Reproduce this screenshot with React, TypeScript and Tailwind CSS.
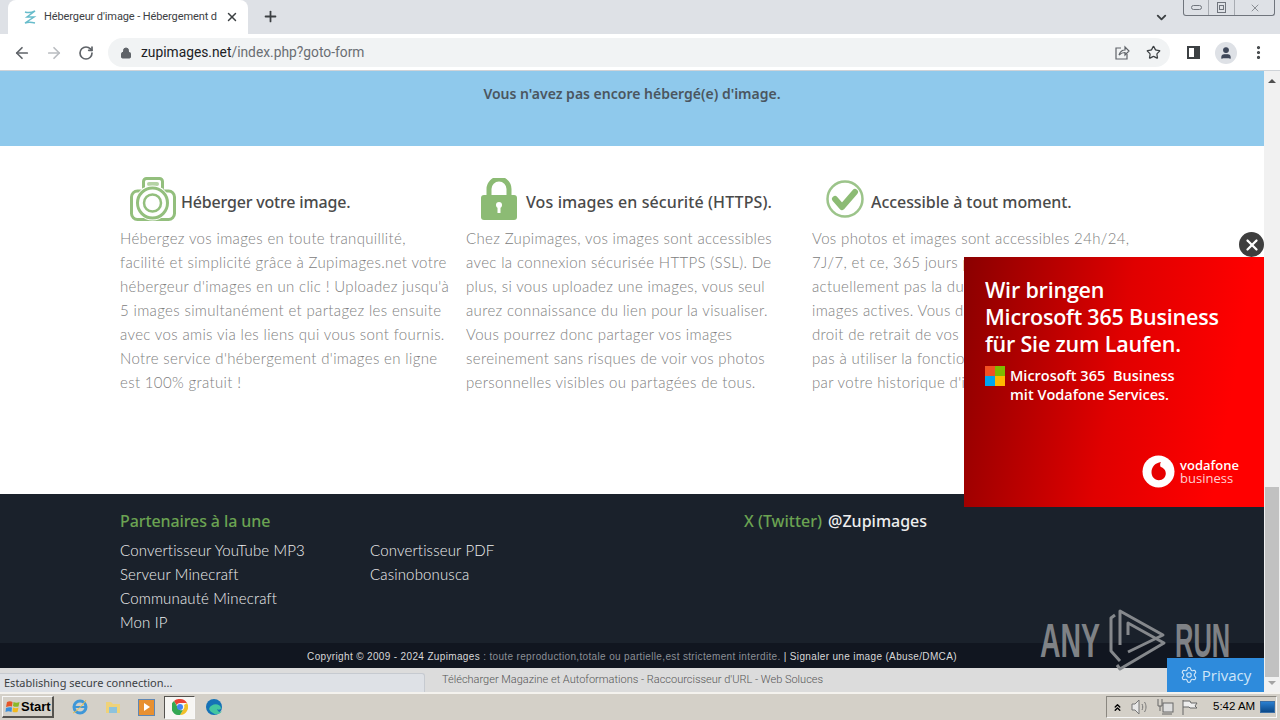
import { ArrowLeft, ArrowRight, ChevronDown, ChevronsUp, Lock, MoreVertical, Plus, RotateCw, Settings, Star, User, X } from 'lucide-react';

const columns = [
  {
    title: 'Héberger votre image.',
    icon: 'camera',
    rowClass: 'pl-[10px] gap-[5px]',
    titleClass: 'tracking-[-0.18px]',
    lines: [
      'Hébergez vos images en toute tranquillité,',
      "facilité et simplicité grâce à Zupimages.net votre",
      "hébergeur d'images en un clic ! Uploadez jusqu'à",
      '5 images simultanément et partagez les ensuite',
      'avec vos amis via les liens qui vous sont fournis.',
      "Notre service d'hébergement d'images en ligne",
      'est 100% gratuit !',
    ],
  },
  {
    title: 'Vos images en sécurité (HTTPS).',
    icon: 'lock',
    rowClass: 'pl-[15px] gap-[9px]',
    titleClass: 'tracking-[0.1px]',
    lines: [
      'Chez Zupimages, vos images sont accessibles',
      'avec la connexion sécurisée HTTPS (SSL). De',
      'plus, si vous uploadez une images, vous seul',
      'aurez connaissance du lien pour la visualiser.',
      'Vous pourrez donc partager vos images',
      'sereinement sans risques de voir vos photos',
      'personnelles visibles ou partagées de tous.',
    ],
  },
  {
    title: 'Accessible à tout moment.',
    icon: 'check',
    rowClass: 'pl-[14px] gap-[7px]',
    titleClass: 'tracking-[-0.06px]',
    // the rest of these lines sits behind the ad
    lines: [
      'Vos photos et images sont accessibles 24h/24,',
      '7J/7, et ce, 365 jours p',
      'actuellement pas la du',
      'images actives. Vous d',
      'droit de retrait de vos',
      'pas à utiliser la fonctio',
      "par votre historique d'i",
    ],
  },
];

function FeatureIcon({ name }: { name: string }) {
  if (name === 'camera') {
    return (
      <svg width="46" height="44" viewBox="0 0 46 44" fill="none" stroke="#93bf7d" strokeWidth="3" className="mb-[4px] shrink-0">
        <rect x="1.500" y="14" width="43" height="28.500" rx="6" />
        <path d="M13.500 14V4.500a3 3 0 0 1 3-3h13a3 3 0 0 1 3 3V14" />
        <rect x="17" y="5" width="12" height="4" rx="2" fill="#b5d3a5" stroke="none" />
        <circle cx="22.500" cy="26" r="17.500" fill="#fff" stroke="none" />
        <circle cx="22.500" cy="26" r="15" />
        <circle cx="22.500" cy="26" r="8.500" strokeWidth="2.500" />
      </svg>
    );
  }
  if (name === 'lock') {
    return (
      <svg width="36" height="42" viewBox="0 0 36 42" className="mb-[4px] shrink-0">
        <path d="M8 20v-9a10 10 0 0 1 20 0v9" fill="none" stroke="#8cbb74" strokeWidth="5" />
        <rect x="0" y="17" width="36" height="25" rx="3" fill="#8cbb74" />
        <circle cx="18" cy="27" r="3" fill="#fff" />
        <rect x="16.500" y="28" width="3" height="7" fill="#fff" />
      </svg>
    );
  }
  return (
    <svg width="38" height="38" viewBox="0 0 38 38" fill="none" className="mb-[4px] shrink-0">
      <circle cx="19" cy="19" r="17.500" stroke="#9cc48a" strokeWidth="2.500" />
      <path d="M9 19l7 8L29 12" stroke="#8cbb74" strokeWidth="6" strokeLinecap="round" strokeLinejoin="round" />
    </svg>
  );
}

function VodafoneLogo() {
  return (
    <svg width="33" height="33" viewBox="0 0 33 33">
      <circle cx="16.500" cy="16.500" r="16" fill="#fff" />
      <path d="M19 7c-5.500.7-9.500 4.800-9.500 10.200 0 4.300 3 8 7.300 8 4.200 0 7-3 7-6.700 0-3.700-2.400-5.600-5.300-6.800C18 10 18 8.400 19 7z" fill="#e60000" />
    </svg>
  );
}

export default function App() {
  return (
    <div className="relative flex h-[720px] w-[1280px] flex-col overflow-hidden bg-white font-['Noto_Sans',sans-serif]">
      {/* Tabs */}
      <div className="relative flex h-[34px] shrink-0 items-end bg-[#dee1e6] pl-[8px]">
        <div className="flex h-[34px] w-[240px] items-center gap-[6px] rounded-t-lg bg-white pl-[14px] pr-[9px]">
          <svg width="16" height="16" viewBox="0 0 16 16" fill="none" stroke="#67bccb" strokeWidth="1.500" className="shrink-0">
            <path d="M3 3c3 1 6 1 10-1L5 8l7 0-9 6c3-1 6-1 10 0" />
          </svg>
          <span className="flex-1 whitespace-nowrap font-['Roboto',sans-serif] text-[11px] tracking-[-0.1px] text-[#3c4043]">Hébergeur d'image - Hébergement d</span>
          <X className="h-[14px] w-[14px] shrink-0 text-[#3c4043]" strokeWidth={2.500} />
        </div>
        <Plus className="mb-[9px] ml-[14px] h-[17px] w-[17px] text-[#3c4043]" strokeWidth={2.500} />
        <ChevronDown className="absolute right-[111px] top-[10px] h-[15px] w-[15px] text-[#3c4043]" strokeWidth={3} />
        {/* Window controls */}
        <div className="absolute right-[5px] top-0 flex h-[16px] w-[92px] items-center rounded-b-[3px] border border-t-0 border-[#70757d]">
          <div className="flex h-full w-[25px] items-center justify-center border-r border-[#a8acb2]">
            <div className="h-[5px] w-[11px] rounded-sm border border-[#70757d]" />
          </div>
          <div className="flex h-full w-[26px] items-center justify-center border-r border-[#a8acb2]">
            <div className="relative h-[11px] w-[9px] border border-[#70757d]">
              <div className="absolute left-[1px] top-[2px] h-[5px] w-[5px] border border-[#70757d]" />
            </div>
          </div>
          <X className="mx-auto h-[12px] w-[12px] text-[#8b8f95]" strokeWidth={2} />
        </div>
      </div>

      {/* Toolbar */}
      <div className="flex h-[37px] shrink-0 items-center border-b border-[#cfd3d8] bg-white pt-[1px]">
        <ArrowLeft className="ml-[13px] h-[18px] w-[18px] text-[#5f6368]" strokeWidth={2.250} />
        <ArrowRight className="ml-[14px] h-[18px] w-[18px] text-[#b9bcc0]" strokeWidth={2.250} />
        <RotateCw className="ml-[15px] h-[16px] w-[16px] text-[#5f6368]" strokeWidth={2.500} />
        <div className="ml-[14px] flex h-[29px] w-[1062px] items-center rounded-full bg-[#f1f3f4] pl-[12px] pr-[9px]">
          <Lock className="h-[12px] w-[12px] text-[#5f6368]" fill="#5f6368" />
          <span className="ml-[9px] flex-1 font-['Roboto',sans-serif] text-[13.8px] text-[#202124]">
            zupimages.net<span className="text-[#6a6e73]">/index.php?goto-form</span>
          </span>
          <svg width="16" height="16" viewBox="0 0 16 16" fill="none" stroke="#5f6368" strokeWidth="1.200" className="mr-[16px]">
            <path d="M7 3H2v11h11V9" />
            <path d="M5 10c1-3 3-5 6-5V2l4 4-4 4V7.500C9 7.500 7 8 5 10z" />
          </svg>
          <Star className="h-[15px] w-[15px] text-[#3c4043]" strokeWidth={2} />
        </div>
        <div className="ml-[17px] flex h-[13px] w-[13px] justify-end border-2 border-[#3c4043]">
          <div className="h-full w-[4px] bg-[#3c4043]" />
        </div>
        <div className="ml-[15px] flex h-[22px] w-[22px] items-center justify-center rounded-full bg-[#dee1e6]">
          <User className="h-[14px] w-[14px] text-[#3e4759]" fill="#3e4759" />
        </div>
        <MoreVertical className="ml-[13px] h-[17px] w-[17px] text-[#3c4043]" strokeWidth={2.500} />
      </div>

      {/* Viewport */}
      <div className="flex min-h-0 flex-1">
        <div className="flex min-w-0 flex-1 flex-col">
          <div className="h-[75px] shrink-0 bg-[#8fc9ec] pt-[12px] text-center text-[14px] font-semibold text-[#4b5660]">
            Vous n'avez pas encore hébergé(e) d'image.
          </div>

          <div className="flex h-[348px] shrink-0 bg-white pl-[120px] pt-[30px]">
            {columns.map((col) => (
              <div key={col.title} className="w-[346px] shrink-0">
                <div className={`flex h-[50px] items-center ${col.rowClass}`}>
                  <FeatureIcon name={col.icon} />
                  <span className={`mt-[2px] whitespace-nowrap text-[16px] font-medium text-[#4a4a4a] ${col.titleClass}`}>{col.title}</span>
                </div>
                <div className="whitespace-nowrap font-['Lato',sans-serif] text-[15px] font-light leading-[24px] tracking-[0.35px] text-[#808080]">
                  {col.lines.map((line) => (
                    <div key={line}>{line}</div>
                  ))}
                </div>
              </div>
            ))}
          </div>

          <div className="flex h-[149px] shrink-0 bg-[#1a212b] pl-[120px] pt-[15px]">
            <div className="w-[624px]">
              <div className="text-[16px] font-medium tracking-[-0.1px] text-[#6ba352]">Partenaires à la une</div>
              <div className="mt-[5px] flex font-['Lato',sans-serif] text-[15px] font-light leading-[24px] tracking-[0.15px] text-[#f0f0f0]">
                <div className="w-[250px]">
                  <div>Convertisseur YouTube MP3</div>
                  <div>Serveur Minecraft</div>
                  <div>Communauté Minecraft</div>
                  <div>Mon IP</div>
                </div>
                <div>
                  <div>Convertisseur PDF</div>
                  <div>Casinobonusca</div>
                </div>
              </div>
            </div>
            <div className="flex gap-[6px] text-[16px] font-medium text-[#6ba352]">
              <span>X (Twitter)</span>
              <span className="text-[#eeeeee]">@Zupimages</span>
            </div>
          </div>

          <div className="h-[25px] shrink-0 bg-[#111620] pt-[6px] text-center font-['Liberation_Sans',sans-serif] text-[10px] tracking-[0.35px] text-[#d8d8d8]">
            Copyright © 2009 - 2024 Zupimages <span className="text-[#8b8f96]">: toute reproduction,totale ou partielle,est strictement interdite.</span> | Signaler une image (Abuse/DMCA)
          </div>

          <div className="flex h-[24px] shrink-0 items-center bg-[#dcdcdc] pl-[442px] font-['Roboto',sans-serif] text-[11px] font-light text-[#555555]">
            Télécharger Magazine et Autoformations - Raccourcisseur d'URL - Web Soluces
          </div>
        </div>

        {/* Scrollbar */}
        <div className="flex w-[16px] shrink-0 flex-col items-center bg-[#f1f1f1]">
          <div className="mt-[8px] h-0 w-0 border-x-[4px] border-b-[4px] border-x-transparent border-b-[#505050]" />
          <div className="mt-[404px] h-[190px] w-[14px] bg-[#c1c1c1]" />
          <div className="mt-[4px] h-0 w-0 border-x-[4px] border-t-[4px] border-x-transparent border-t-[#a3a3a3]" />
        </div>
      </div>

      {/* Taskbar */}
      <div className="flex h-[28px] shrink-0 items-center border-t-2 border-[#f4f2ee] bg-[#d4d0c8] pl-[2px]">
        <div className="flex h-[22px] w-[52px] items-center gap-[1px] border border-b-2 border-r-2 border-[#f7f7f7] border-b-[#55534f] border-r-[#55534f] pl-[2px]">
          <svg width="15" height="15" viewBox="0 0 15 15" className="shrink-0">
            <path d="M2 3c2-1 4-1 5.500 0L7 7.500C5 7 3.500 7 1 8z" fill="#e5562a" />
            <path d="M8.500 3c2 1 4 1 6 0l-1 4.500c-2 .5-4 .5-5.500-.5z" fill="#8ab82a" />
            <path d="M1 9c2-1 4-1 6-.5L6.500 13c-2-1-4-1-6 0z" fill="#3a8fdc" />
            <path d="M8 8.500c2 1 4 1 5.500 0l-1 4.500c-2 .5-4 .5-5-.5z" fill="#f2b91c" />
          </svg>
          <span className="font-['Liberation_Sans',sans-serif] text-[13px] font-bold text-black">Start</span>
        </div>
        <svg width="18" height="18" viewBox="0 0 18 18" fill="none" className="ml-[17px]">
          <circle cx="9" cy="9" r="6" stroke="#3f97d8" strokeWidth="3" />
          <path d="M3 9h12" stroke="#3f97d8" strokeWidth="2" />
          <path d="M2 15c3-1 10-8 13-13" stroke="#f0c040" strokeWidth="1" />
        </svg>
        <svg width="16" height="16" viewBox="0 0 16 16" className="ml-[16px]">
          <path d="M1 3h5l2 2h7v9H1z" fill="#efd279" />
          <rect x="4" y="8" width="8" height="6" fill="#8dc2dc" />
        </svg>
        <div className="ml-[17px] flex h-[17px] w-[17px] items-center justify-center border border-[#5e87b5] bg-[#e89030]">
          <div className="h-0 w-0 border-y-[4px] border-l-[6px] border-y-transparent border-l-white" />
        </div>
        <div className="ml-[9px] flex h-[23px] w-[31px] items-center justify-center border border-b-[#f8f8f8] border-l-[#55534f] border-r-[#f8f8f8] border-t-[#55534f] bg-[#f7f6f3]">
          <svg width="16" height="16" viewBox="0 0 16 16">
            <path d="M8 0a8 8 0 0 1 7 4H8a4 4 0 0 0-3.500 2L2 2a8 8 0 0 1 6-2z" fill="#ea4335" />
            <path d="M15 4a8 8 0 0 1-7 12l3.500-6A4 4 0 0 0 12 6z" fill="#f2c029" />
            <path d="M2 2l3.500 6A4 4 0 0 0 11 11l-3 5A8 8 0 0 1 2 2z" fill="#34a853" />
            <circle cx="8" cy="8" r="3" fill="#4285f4" />
          </svg>
        </div>
        <svg width="18" height="18" viewBox="0 0 18 18" className="ml-[10px]">
          <circle cx="9" cy="9" r="8" fill="#1572b6" />
          <path d="M4 11c2-6 11-6 12-1 0 2-3 2-4 1 1 3 3 4 5 2-2 4-7 4-9 2-2-1-3-2-4-4z" fill="#43c6a0" />
        </svg>
        {/* Tray */}
        <div className="ml-auto mr-[3px] flex h-[22px] w-[171px] items-center border border-b-[#f7f7f7] border-l-[#8a8780] border-r-[#f7f7f7] border-t-[#8a8780] pl-[5px]">
          <ChevronsUp className="h-[11px] w-[11px] text-black" strokeWidth={3} />
          <svg width="18" height="16" viewBox="0 0 18 16" fill="none" stroke="#777" className="ml-[8px]">
            <path d="M1 5h3l4-4v14L4 11H1z" fill="#e8e8e8" />
            <path d="M11 5c1 2 1 4 0 6M13.500 3c2 3 2 7 0 10" />
          </svg>
          <svg width="18" height="18" viewBox="0 0 18 18" fill="none" stroke="#666" className="ml-[7px]">
            <rect x="7" y="5" width="10" height="9" fill="#ddd" />
            <path d="M2 1v7h4V1M4 8v5M6 16h10" />
          </svg>
          <svg width="17" height="17" viewBox="0 0 17 17" fill="none" stroke="#666" className="ml-[7px]">
            <path d="M2 1v15M2 2h7l1 2h6l-2 3 2 2H9L8 8H2" fill="#eee" />
          </svg>
          <span className="ml-[15px] font-['Liberation_Sans',sans-serif] text-[11.500px] text-black">5:42 AM</span>
          <div className="ml-auto mr-[1px] h-[12px] w-[15px] border border-[#3a6ea5] bg-gradient-to-b from-[#2a7fd0] to-[#0c4a8a]" />
        </div>
      </div>

      {/* Status bubble */}
      <div className="absolute bottom-[28px] left-0 flex h-[19px] w-[425px] items-center rounded-tr-[3px] border-r border-t border-[#c6cad0] bg-[#dee1e6] pl-[4px] font-['Noto_Sans',sans-serif] text-[11px] text-[#3c4043]">
        Establishing secure connection...
      </div>

      {/* Ad */}
      <div className="absolute left-[964px] top-[257px] h-[250px] w-[300px] bg-[linear-gradient(100deg,#8a0000_0%,#e00000_50%,#ff0000_85%)] pl-[21px] pt-[19px] font-['Open_Sans',sans-serif] text-white">
        <div className="text-[21.500px] font-semibold leading-[27px] tracking-[-0.2px]">
          <div>Wir bringen</div>
          <div>Microsoft 365 Business</div>
          <div>für Sie zum Laufen.</div>
        </div>
        <div className="mt-[9px] flex gap-[5px]">
          <div className="grid h-[20px] w-[20px] grid-cols-2">
            <div className="bg-[#f25022]" />
            <div className="bg-[#7fba00]" />
            <div className="bg-[#00a4ef]" />
            <div className="bg-[#ffb900]" />
          </div>
          <div className="text-[14.500px] font-semibold leading-[19px]">
            <div>Microsoft 365 <span className="ml-[4px]">Business</span></div>
            <div>mit Vodafone Services.</div>
          </div>
        </div>
        <div className="absolute bottom-[19px] right-[25px] flex items-center gap-[5px]">
          <VodafoneLogo />
          <div className="text-[13px] leading-[13px]">
            <div className="font-semibold">vodafone</div>
            <div className="text-[#ffd0d0]">business</div>
          </div>
        </div>
      </div>
      <div className="absolute left-[1239px] top-[232px] flex h-[25px] w-[25px] items-center justify-center rounded-full bg-[#3e3e3e]">
        <X className="h-[18px] w-[18px] text-white" strokeWidth={3} />
      </div>

      {/* Watermark */}
      <div className="pointer-events-none absolute left-[1040px] top-[605px] flex h-[70px] items-center text-[#7f8286]">
        <span className="w-[60px] origin-left font-['Liberation_Sans',sans-serif] text-[49px] font-bold leading-none [transform:scaleX(0.58)]">ANY</span>
        <svg width="75" height="70" viewBox="0 0 75 70" fill="none" stroke="#85888c" strokeWidth="3" strokeLinejoin="round" className="shrink-0">
          <path d="M15 10l-4 3v33l9 10" />
          <path d="M20 40V6l43 24-35 17" />
          <path d="M28 30V18l36 20-44 26-3-4" />
        </svg>
        <span className="origin-left font-['Liberation_Sans',sans-serif] text-[49px] font-bold leading-none [transform:scaleX(0.52)]">RUN</span>
      </div>

      {/* Privacy */}
      <div className="absolute left-[1167px] top-[658px] flex h-[34px] w-[97px] items-center justify-center gap-[4px] bg-[#2e8bdc] font-['Open_Sans',sans-serif] text-[15px] text-[#cfe6f8]">
        <Settings className="h-[18px] w-[18px]" strokeWidth={1.500} />
        Privacy
      </div>
    </div>
  );
}
